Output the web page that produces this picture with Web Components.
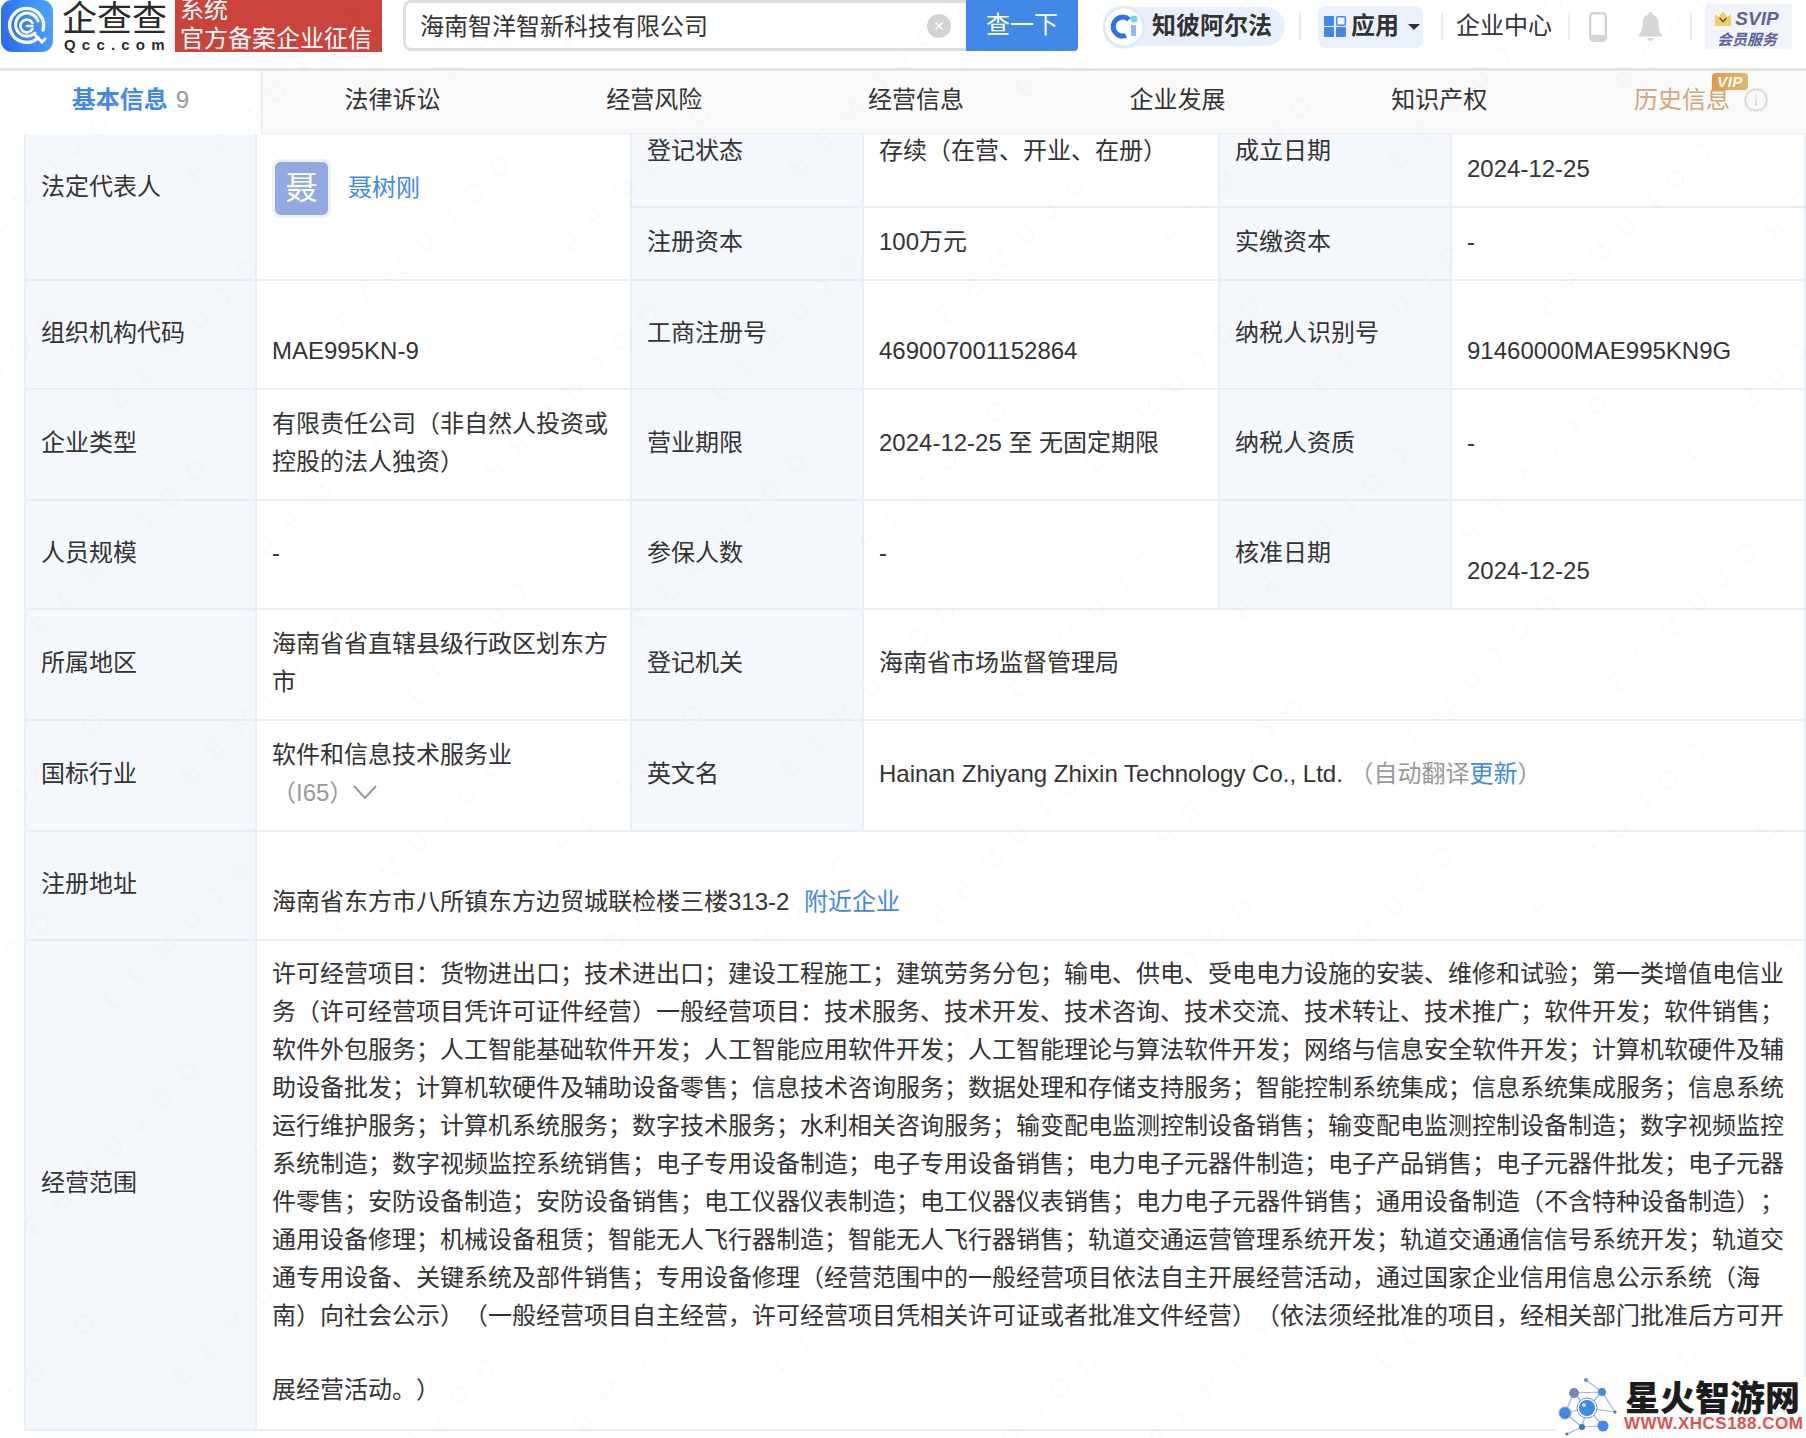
<!DOCTYPE html>
<html lang="zh-CN">
<head>
<meta charset="utf-8">
<title>海南智洋智新科技有限公司</title>
<style>
  html, body { margin: 0; padding: 0; background: #fff; }
  body {
    width: 1806px; height: 1438px; overflow: hidden; position: relative;
    font-family: "Liberation Sans", "Noto Sans CJK SC", sans-serif;
    font-size: 24px; color: #333;
    text-spacing-trim: space-all;
  }
  .clip { height: 1304px; overflow: hidden; }
  info-table { margin-top: -35px; }
  .link { color: #4188e8; }
  .muted { color: #999; }
  .count { color: #999; font-weight: 400; margin-left: 8px; }
  .wide { grid-column: 2 / -1; }
  .tall { grid-row: span 2; }
  .rep { display: flex; align-items: center; gap: 17px; margin-top: 2px; }
  .avatar {
    width: 59px; height: 59px; box-sizing: border-box; border: 3px solid #eef0f3; border-radius: 8px;
    background: #92aadf; background-clip: padding-box; color: #fff; font-size: 32px;
    display: flex; align-items: center; justify-content: center;
  }
  .chev { display: inline-block; vertical-align: 2px; margin-left: 0; }
  .near { margin-left: 8px; }
  .tail { display: block; margin-top: 36px; }
</style>
</head>
<body>

<qcc-header></qcc-header>
<qcc-tab-bar>
  <qcc-tab active>基本信息<span class="count">9</span></qcc-tab>
  <qcc-tab>法律诉讼</qcc-tab>
  <qcc-tab>经营风险</qcc-tab>
  <qcc-tab>经营信息</qcc-tab>
  <qcc-tab>企业发展</qcc-tab>
  <qcc-tab>知识产权</qcc-tab>
  <qcc-tab vip>历史信息</qcc-tab>
</qcc-tab-bar>

<div class="clip">
  <info-table>
    <info-label class="tall">法定代表人</info-label>
    <info-value class="tall">
      <div class="rep"><div class="avatar">聂</div><span class="link">聂树刚</span></div>
    </info-value>
    <info-label>登记状态</info-label>
    <info-value>存续（在营、开业、在册）</info-value>
    <info-label>成立日期</info-label>
    <info-value offset>2024-12-25</info-value>

    <info-label>注册资本</info-label>
    <info-value>100万元</info-value>
    <info-label>实缴资本</info-label>
    <info-value>-</info-value>

    <info-label>组织机构代码</info-label>
    <info-value offset>MAE995KN-9</info-value>
    <info-label>工商注册号</info-label>
    <info-value offset>469007001152864</info-value>
    <info-label>纳税人识别号</info-label>
    <info-value offset>91460000MAE995KN9G</info-value>

    <info-label>企业类型</info-label>
    <info-value>有限责任公司（非自然人投资或控股的法人独资）</info-value>
    <info-label>营业期限</info-label>
    <info-value>2024-12-25 至 无固定期限</info-value>
    <info-label>纳税人资质</info-label>
    <info-value>-</info-value>

    <info-label>人员规模</info-label>
    <info-value>-</info-value>
    <info-label>参保人数</info-label>
    <info-value>-</info-value>
    <info-label>核准日期</info-label>
    <info-value offset>2024-12-25</info-value>

    <info-label>所属地区</info-label>
    <info-value>海南省省直辖县级行政区划东方市</info-value>
    <info-label>登记机关</info-label>
    <info-value style="grid-column: span 3">海南省市场监督管理局</info-value>

    <info-label>国标行业</info-label>
    <info-value>软件和信息技术服务业<br><span class="muted">（I65）</span><svg class="chev" width="24" height="14" viewBox="0 0 24 14" fill="none" stroke="#999" stroke-width="2"><path d="M1 1l11 12L23 1"/></svg></info-value>
    <info-label>英文名</info-label>
    <info-value style="grid-column: span 3">Hainan Zhiyang Zhixin Technology Co., Ltd. <span class="muted">（自动翻译</span><span class="link">更新</span><span class="muted">）</span></info-value>

    <info-label>注册地址</info-label>
    <info-value class="wide" offset>海南省东方市八所镇东方边贸城联检楼三楼313-2 <span class="link near">附近企业</span></info-value>

    <info-label>经营范围</info-label>
    <info-value class="wide" top>许可经营项目：货物进出口；技术进出口；建设工程施工；建筑劳务分包；输电、供电、受电电力设施的安装、维修和试验；第一类增值电信业务（许可经营项目凭许可证件经营）一般经营项目：技术服务、技术开发、技术咨询、技术交流、技术转让、技术推广；软件开发；软件销售；软件外包服务；人工智能基础软件开发；人工智能应用软件开发；人工智能理论与算法软件开发；网络与信息安全软件开发；计算机软硬件及辅助设备批发；计算机软硬件及辅助设备零售；信息技术咨询服务；数据处理和存储支持服务；智能控制系统集成；信息系统集成服务；信息系统运行维护服务；计算机系统服务；数字技术服务；水利相关咨询服务；输变配电监测控制设备销售；输变配电监测控制设备制造；数字视频监控系统制造；数字视频监控系统销售；电子专用设备制造；电子专用设备销售；电力电子元器件制造；电子产品销售；电子元器件批发；电子元器件零售；安防设备制造；安防设备销售；电工仪器仪表制造；电工仪器仪表销售；电力电子元器件销售；通用设备制造（不含特种设备制造）；通用设备修理；机械设备租赁；智能无人飞行器制造；智能无人飞行器销售；轨道交通运营管理系统开发；轨道交通通信信号系统开发；轨道交通专用设备、关键系统及部件销售；专用设备修理（经营范围中的一般经营项目依法自主开展经营活动，通过国家企业信用信息公示系统（海南）向社会公示）（一般经营项目自主经营，许可经营项目凭相关许可证或者批准文件经营）（依法须经批准的项目，经相关部门批准后方可开<span class="tail">展经营活动。）</span></info-value>
  </info-table>
</div>

<watermark-layer></watermark-layer>
<site-stamp></site-stamp>

<script>
const FONT = `"Liberation Sans", "Noto Sans CJK SC", sans-serif`;

class QccHeader extends HTMLElement {
  constructor() {
    super();
    this.attachShadow({ mode: "open" }).innerHTML = `
      <style>
        :host {
          display: flex; align-items: center; padding-bottom: 15px;
          height: 53px; border-bottom: 3px solid #e3e3e3;
          font-family: ${FONT}; font-size: 24px; color: #333; background: #fff;
        }
        .logo { display: block; flex: none; margin-left: 1px; align-self: flex-start; }
        .word { flex: none; width: 112px; margin-left: 9px; align-self: flex-start; color: #2b2b2b; }
        .word b { display: block; font-size: 35px; font-weight: 400; line-height: 35px; margin-top: 1px; white-space: nowrap; }
        .word i { display: block; font: bold 15px/15px "Liberation Sans", sans-serif; letter-spacing: 6.2px; margin: 1px 0 0 2px; white-space: nowrap; }
        .red {
          flex: none; width: 202px; height: 52px; padding-left: 5px; overflow: hidden; align-self: flex-start;
          background: #cb443c; color: #fff; line-height: 29px; margin-left: 1px;
        }
        .red div { white-space: nowrap; }
        .red div:first-child { margin-top: -5px; }
        .search {
          flex: none; display: flex; width: 675px; height: 51px; margin-left: 21px; align-self: flex-start;
        }
        .input {
          flex: 1; display: flex; align-items: center; justify-content: space-between; box-sizing: border-box;
          padding: 0 15px 0 14px; border: 3px solid #dedede; border-right: 0; border-radius: 8px 0 0 8px; background: #fff;
        }
        .input span { margin-bottom: 3px; }
        .clear { display: block; }
        .go {
          flex: none; width: 112px; background: #4188e8; color: #fff; text-align: center; line-height: 49px;
          border-radius: 0 0 4px 0;
        }
        .alpha {
          flex: none; display: flex; align-items: center; width: 180px; height: 39px; margin-left: 27px;
          background: #e9f0fd; border-radius: 20px; font-weight: bold;
          white-space: nowrap;
        }
        .alpha span { margin-bottom: 7px; }
        .alpha svg { flex: none; margin: 0 6px 0 -3px; display: block; }
        .bar { flex: none; width: 2px; height: 27px; background: #ececec; }
        .apps {
          flex: none; display: flex; align-items: center; width: 105px; height: 42px; box-sizing: border-box;
          padding-left: 6px; background: #eaf1fd; border-radius: 8px; font-weight: bold;
        }
        .apps span { margin-bottom: 6px; }
        .apps svg { flex: none; display: block; }
        .caret { width: 0; height: 0; margin-left: 9px; border: 6px solid transparent; border-top: 6px solid #333; border-bottom: 0; }
        .center { flex: none; white-space: nowrap; margin-top: -6px; }
        .svip {
          flex: none; width: 87px; height: 45px; margin-left: 13px; background: #f2f3fb; border-radius: 4px;
          color: #5c6399; font-style: italic; font-weight: bold; text-align: center;
          display: flex; flex-direction: column; align-items: center;
        }
        .svip .row { display: flex; align-items: center; gap: 4px; font-size: 19px; line-height: 23px; margin-top: 3px; margin-left: -3px; }
        .svip .sub { font-size: 15px; line-height: 19px; margin-left: -3px; }
      </style>
      <svg class="logo" width="52" height="52" viewBox="0 0 52 52">
        <defs><linearGradient id="g" x1="0" x2="1" y1="0.6" y2="0.4"><stop offset="0" stop-color="#2a6bef"/><stop offset="1" stop-color="#4ba3f8"/></linearGradient></defs>
        <rect width="52" height="52" rx="11" fill="url(#g)"/>
        <g fill="none" stroke="#fff" stroke-linecap="round">
          <path d="M37 38a17 17 0 1 1 5-8" stroke-width="3.4"/>
          <path d="M33 34l8 8 3-3" stroke-width="3"/>
          <path d="M34 33a11.5 11.5 0 1 1 3-12" stroke-width="3"/>
          <path d="M31.5 23a6.4 6.4 0 1 0 0 6M26 26h5.5" stroke-width="2.6"/>
        </g>
      </svg>
      <div class="word"><b>企查查</b><i>Qcc.com</i></div>
      <div class="red"><div>系统</div><div>官方备案企业征信</div></div>
      <div class="search">
        <div class="input">
          <span>海南智洋智新科技有限公司</span>
          <svg class="clear" width="24" height="24" viewBox="0 0 24 24"><circle cx="12" cy="12" r="12" fill="#d3d3d3"/><path d="M8.5 8.5l7 7M15.5 8.5l-7 7" stroke="#fff" stroke-width="1.6"/></svg>
        </div>
        <div class="go">查一下</div>
      </div>
      <div class="alpha">
        <svg width="44" height="44" viewBox="0 0 44 44">
          <circle cx="22" cy="22" r="20" fill="#fff" stroke="#dfe9fb" stroke-width="3"/>
          <path d="M27 14.5a9.5 9.5 0 1 0 -3 16" fill="none" stroke="#2d6ff0" stroke-width="5"/>
          <circle cx="32" cy="14" r="3.6" fill="#6ad6f6"/>
          <path d="M29 20h5v11h-5z" fill="#8db8f3"/>
        </svg>
        <span>知彼阿尔法</span>
      </div>
      <div class="bar" style="margin-left:14px"></div>
      <div class="apps" style="margin-left:17px">
        <svg width="22" height="21" viewBox="0 0 22 21" style="margin-right:5px">
          <rect width="10" height="10" fill="#4188e8" rx="1"/>
          <rect x="12.7" y=".7" width="8.6" height="8.6" fill="#f3f7fe" stroke="#4188e8" stroke-width="1.4" rx="1"/>
          <rect y="11" width="10" height="10" fill="#4188e8" rx="1"/>
          <rect x="12" y="11" width="10" height="10" fill="#4188e8" rx="1"/>
        </svg>
        <span>应用</span><div class="caret"></div>
      </div>
      <div class="bar" style="margin-left:18px"></div>
      <div class="center" style="margin-left:13px">企业中心</div>
      <div class="bar" style="margin-left:16px"></div>
      <svg width="18" height="30" viewBox="0 0 18 30" style="flex:none;margin-left:19px;display:block">
        <rect x="1.2" y="1.2" width="15.6" height="27.6" rx="3" fill="#fff" stroke="#d4d4d4" stroke-width="2.4"/>
        <rect x="1" y="23" width="16" height="6" rx="2" fill="#d4d4d4"/>
      </svg>
      <svg width="25" height="30" viewBox="0 0 25 30" style="flex:none;margin-left:31px;display:block">
        <path d="M12.5 0a2 2 0 0 1 2 2.6c4 1.1 6 4.6 6 9.4 0 6 1.6 9 4 11v1.500H.5V23c2.400-2 4-5 4-11 0-4.800 2-8.300 6-9.400A2 2 0 0 1 12.500 0z" fill="#d6d6d6"/>
        <path d="M9.500 26h6a3 3 0 0 1-6 0z" fill="#d6d6d6"/>
      </svg>
      <div class="bar" style="margin-left:27px"></div>
      <div class="svip">
        <div class="row">
          <svg width="16" height="15" viewBox="0 0 16 15" style="display:block"><path d="M0 3l4 3 4-6 4 6 4-3v12H0z" fill="#efcd6a"/><path d="M4.500 7l3.500 3.500L11.500 7" fill="none" stroke="#7a5a1e" stroke-width="1.600"/></svg>
          <span>SVIP</span>
        </div>
        <div class="sub">会员服务</div>
      </div>`;
  }
}

class QccTabBar extends HTMLElement {
  constructor() {
    super();
    this.attachShadow({ mode: "open" }).innerHTML = `
      <style>
        :host {
          display: flex; height: 63px; overflow: hidden; position: relative; z-index: 2;
          background: #f9f9f9; font-family: ${FONT}; font-size: 24px; color: #333;
        }
      </style>
      <slot></slot>`;
  }
}

class QccTab extends HTMLElement {
  constructor() {
    super();
    const vip = this.hasAttribute("vip");
    this.attachShadow({ mode: "open" }).innerHTML = `
      <style>
        :host {
          flex: 0 0 261.700px; box-sizing: border-box; height: 63px; padding-bottom: 10px;
          display: flex; align-items: center; justify-content: center;
          border-bottom: 1px solid #eee; white-space: nowrap;
        }
        :host([active]) { background: #fff; border-bottom: 0; border-right: 1px solid #e6e6e6; color: #4188e8; font-weight: bold; }
        :host([vip]) { color: #d2a679; }
        .wrap { position: relative; display: flex; align-items: center; }
        .badge {
          position: absolute; left: 78px; top: -7px; width: 36px; height: 17px; border-radius: 4px 4px 4px 0;
          background: linear-gradient(90deg, #dd9c42, #e6b570);
          color: #fff; font: italic bold 15px/17px "Liberation Sans", sans-serif; text-align: center; letter-spacing: .5px;
        }
        svg { display: block; margin: 6px 0 0 14px; }
      </style>
      <div class="wrap">
        <span><slot></slot></span>
        ${vip ? `<span class="badge">VIP</span>
        <svg width="24" height="24" viewBox="0 0 24 24" fill="none"><circle cx="12" cy="12" r="10.800" stroke="#dcdcdc" stroke-width="2"/><path d="M12 6.500v2M12 10.500v7.500" stroke="#dcdcdc" stroke-width="2"/></svg>` : ""}
      </div>`;
  }
}

class InfoTable extends HTMLElement {
  constructor() {
    super();
    this.attachShadow({ mode: "open" }).innerHTML = `
      <style>
        :host {
          display: grid; margin-left: 24px; box-sizing: border-box;
          grid-template-columns: 231px 375px 232px 356px 232px 354px;
          grid-template-rows: 109px 73px 109px 111px 109px 111px 111px 109px 490px;
          border-left: 2px solid #e6eef7;
          font-family: ${FONT}; font-size: 24px; color: #333;
        }
      </style>
      <slot></slot>`;
  }
}

class InfoLabel extends HTMLElement {
  constructor() {
    super();
    this.attachShadow({ mode: "open" }).innerHTML = `
      <style>
        :host {
          display: flex; align-items: center; box-sizing: border-box; padding: 0 0 9px 15px; min-width: 0;
          background: #f4f8fd; border-right: 2px solid #e6eef7; border-bottom: 2px solid #e6eef7;
          white-space: nowrap;
        }
      </style>
      <slot></slot>`;
  }
}

class InfoValue extends HTMLElement {
  constructor() {
    super();
    this.attachShadow({ mode: "open" }).innerHTML = `
      <style>
        :host {
          display: flex; align-items: center; box-sizing: border-box; min-width: 0; padding: 0 15px 4px;
          line-height: 38px; border-right: 2px solid #e6eef7; border-bottom: 2px solid #e6eef7;
        }
        :host([offset]) { padding: 32px 15px 0; }
        :host([top]) { align-items: flex-start; padding: 14px 18px 0 15px; }
        .body { min-width: 0; }
      </style>
      <div class="body"><slot></slot></div>`;
  }
}

class WatermarkLayer extends HTMLElement {
  constructor() {
    super();
    this.attachShadow({ mode: "open" }).innerHTML = `
      <style>
        :host { position: absolute; left: 0; top: 0; width: 1806px; height: 1438px; pointer-events: none; z-index: 3; }
        svg { display: block; }
      </style>
      <svg width="1806" height="1438">
        <defs>
          <pattern id="w" width="430" height="210" patternUnits="userSpaceOnUse" patternTransform="rotate(-45)">
            <text x="10" y="60" font-family="Liberation Sans, sans-serif" font-size="26" letter-spacing="18" fill="#000" fill-opacity=".014">EEMUJOD</text>
            <text x="225" y="165" font-family="Liberation Sans, sans-serif" font-size="26" letter-spacing="18" fill="#000" fill-opacity=".014">EEMUJOD</text>
          </pattern>
        </defs>
        <rect width="1806" height="1438" fill="url(#w)"/>
      </svg>`;
  }
}

class SiteStamp extends HTMLElement {
  constructor() {
    super();
    this.attachShadow({ mode: "open" }).innerHTML = `
      <style>
        :host {
          position: absolute; left: 1556px; top: 1377px; width: 250px; height: 61px; z-index: 4;
          background: #fff; display: flex;
        }
        svg { flex: none; display: block; }
        .text { margin-left: 4px; font-family: "Noto Sans CJK SC", sans-serif; }
        .name { font-size: 35px; line-height: 36px; font-weight: 900; color: #1c1c1c; margin: 1px 0 0 1px; white-space: nowrap; }
        .url { font: bold 17px/18px "Liberation Sans", sans-serif; color: #e0524e; white-space: nowrap; letter-spacing: .5px; margin-top: 1px; }
      </style>
      <svg width="64" height="61" viewBox="1556 1377 64 61">
        <g stroke="#9fb4dc" stroke-width="1.200" fill="none">
          <path d="M1586 1380l16 12M1574 1393l28-1M1574 1393l-9 20M1574 1393l13 15M1602 1392l-15 16M1565 1413l22-5M1565 1413l17 14M1587 1408l28 4M1587 1408l16 18M1587 1408l-5 19M1582 1427l21-1M1582 1427l-15 7M1602 1392l13 20"/>
        </g>
        <circle cx="1586" cy="1380" r="2" fill="#7488b8"/>
        <circle cx="1574" cy="1393" r="4.500" fill="#8a7fb0" stroke="#4a8ae6"/>
        <circle cx="1602" cy="1392" r="4" fill="#4188e8"/>
        <circle cx="1565" cy="1413" r="6" fill="#4188e8" stroke="#8a9fd0"/>
        <circle cx="1603" cy="1426" r="5.500" fill="#4188e8"/>
        <circle cx="1582" cy="1427" r="3" fill="#3d6fc4"/>
        <circle cx="1615" cy="1412" r="1.600" fill="#5d72b0"/>
        <circle cx="1567" cy="1434" r="1.600" fill="#5d72b0"/>
        <circle cx="1587" cy="1408" r="10" fill="#fff" stroke="#6f8bc8"/>
        <circle cx="1587" cy="1408" r="8" fill="#4188e8"/>
        <circle cx="1584" cy="1405" r="2" fill="#cfe0fb"/>
      </svg>
      <div class="text">
        <div class="name">星火智游网</div>
        <div class="url">WWW.XHCS188.COM</div>
      </div>`;
  }
}

customElements.define("qcc-header", QccHeader);
customElements.define("qcc-tab-bar", QccTabBar);
customElements.define("qcc-tab", QccTab);
customElements.define("info-table", InfoTable);
customElements.define("info-label", InfoLabel);
customElements.define("info-value", InfoValue);
customElements.define("watermark-layer", WatermarkLayer);
customElements.define("site-stamp", SiteStamp);
</script>
</body>
</html>
